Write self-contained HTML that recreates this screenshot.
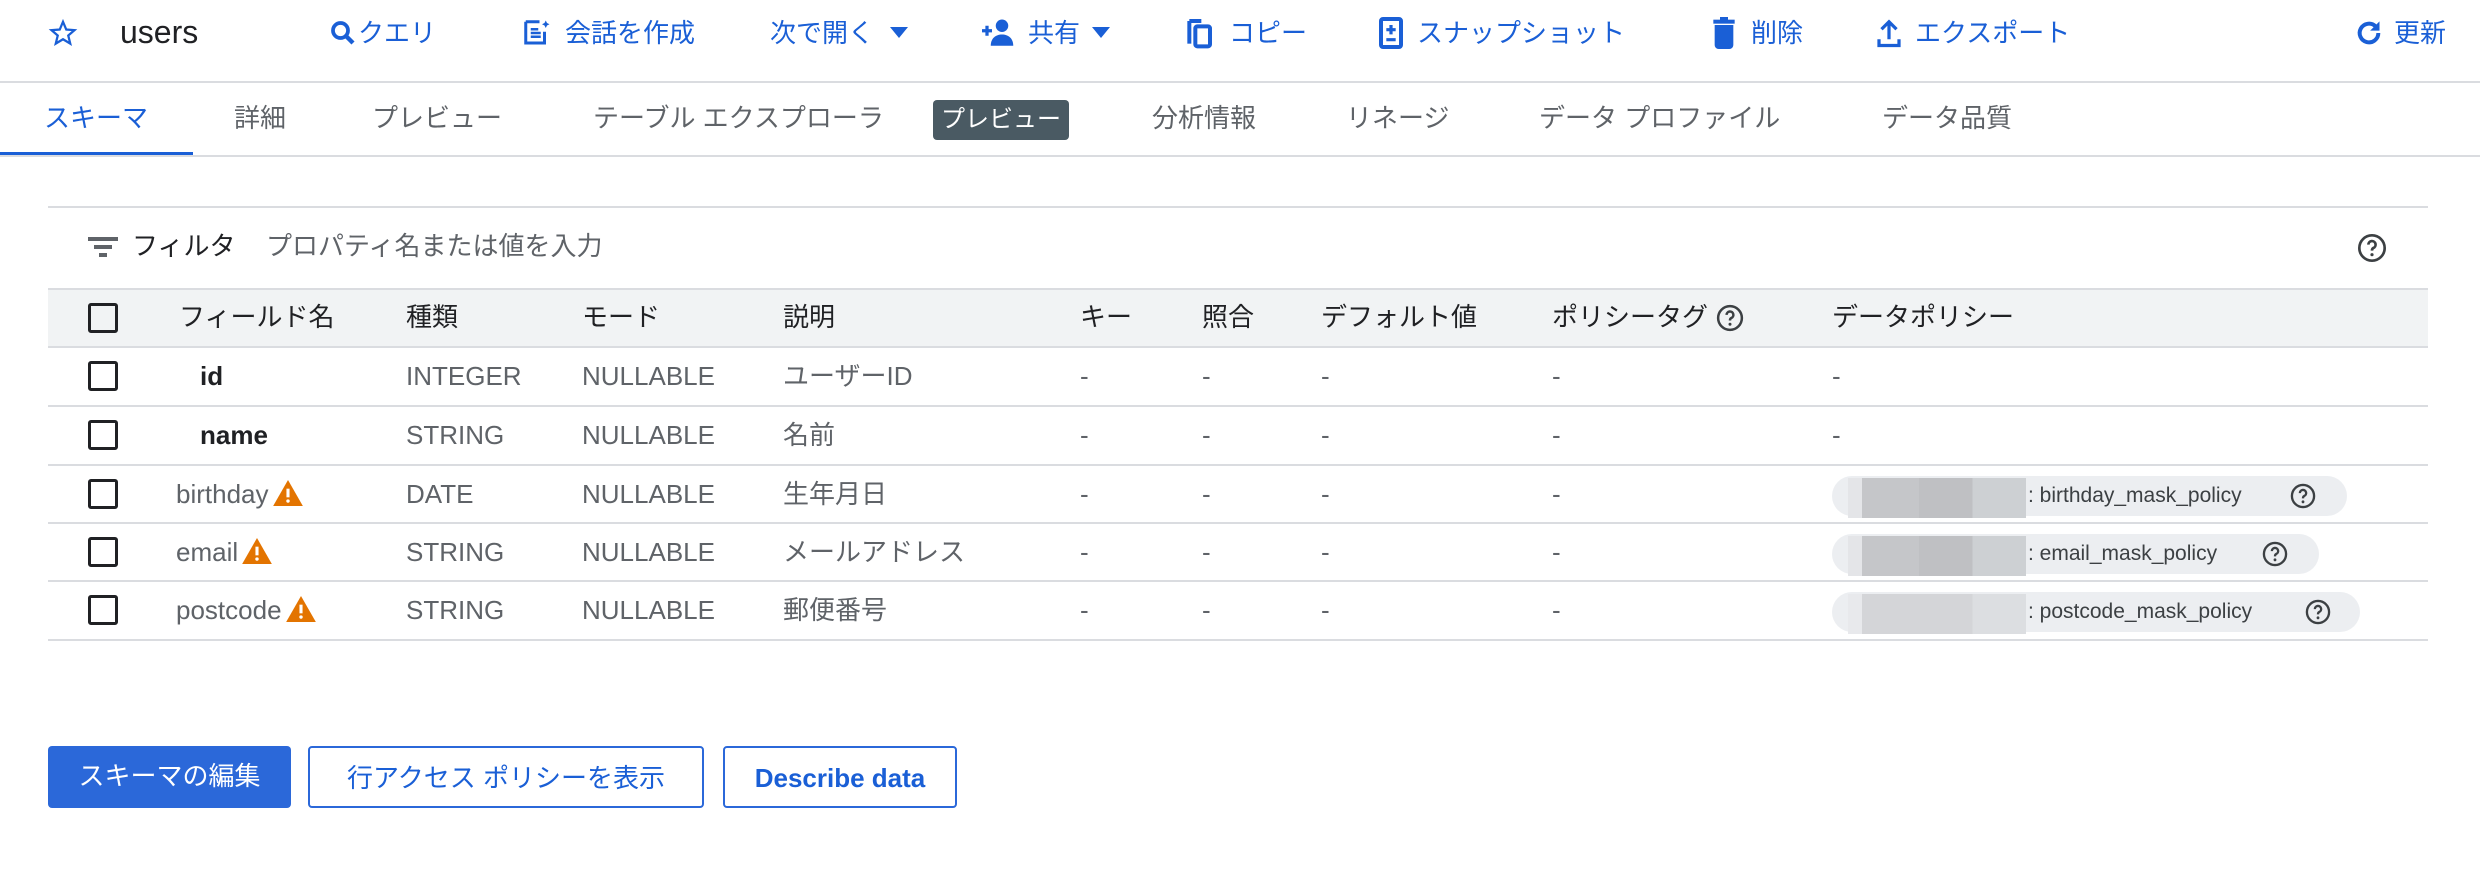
<!DOCTYPE html>
<html><head><meta charset="utf-8"><style>
*{margin:0;padding:0;box-sizing:border-box}
body{width:2480px;height:880px;background:#fff;font-family:"Liberation Sans","Noto Sans CJK JP",sans-serif;position:relative;overflow:hidden;color:#202124}
.a{position:absolute;white-space:nowrap}
.tb{color:#1a5fd6;font-size:26px;top:16px;line-height:34px}
.tab{font-size:26px;color:#5f6368;top:100px;line-height:36px}
.hl{position:absolute;left:48px;width:2380px;height:2px;background:#dadce0}
.cb{position:absolute;left:88px;width:30px;height:30px;border:3px solid #202124;border-radius:3px}
.c{position:absolute;font-size:26px;color:#5f6368;line-height:34px;white-space:nowrap}
.h{color:#202124}
.warn{display:inline-block;vertical-align:-3px;margin-left:4px}
.chip{position:absolute;left:1832px;height:40px;border-radius:20px;background:#eceef1;font-size:21px;color:#3c4043;line-height:40px;white-space:nowrap}
.chip span{position:absolute;left:196px;top:0}
.chip svg{position:absolute;top:6px}
.blur{position:absolute;left:16px;top:2px;width:178px;height:40px;background:linear-gradient(90deg,#e4e5e8 0 8%,#c5c6c9 8% 40%,#bfc0c3 40% 70%,#cdd0d3 70% 100%)}
.btn{position:absolute;top:746px;height:62px;border-radius:4px;font-size:26px;line-height:60px;text-align:center}
</style></head><body>
<svg class="a" style="left:48px;top:18px" width="30" height="30" viewBox="0 0 24 24"><path d="M12 3l2.6 6.2 6.6.5-5 4.3 1.6 6.5L12 17l-5.8 3.5 1.6-6.5-5-4.3 6.6-.5z" fill="none" stroke="#1a5fd6" stroke-width="1.8"/></svg>
<div class="a" style="left:120px;top:12px;font-size:32px;line-height:40px;color:#202124">users</div>
<svg class="a" style="left:328px;top:18px" width="30" height="30" viewBox="0 0 24 24"><circle cx="10" cy="10" r="6" fill="none" stroke="#1a5fd6" stroke-width="3"/><path d="M14 14l6 6" stroke="#1a5fd6" stroke-width="3.5"/></svg>
<div class="a tb" style="left:358px">クエリ</div>
<svg class="a" style="left:522px;top:17px" width="30" height="32" viewBox="0 0 24 24"><path d="M3 3v17h15V11" fill="none" stroke="#1a5fd6" stroke-width="2.4"/><path d="M3 3h11" stroke="#1a5fd6" stroke-width="2.4"/><path d="M7 9h6M7 12h8M7 15h8" stroke="#1a5fd6" stroke-width="2"/><path d="M19 2l1 2 2 1-2 1-1 2-1-2-2-1 2-1z" fill="#1a5fd6"/></svg>
<div class="a tb" style="left:565px">会話を作成</div>
<div class="a tb" style="left:770px">次で開く</div>
<svg class="a" style="left:890px;top:27px" width="18" height="12"><path d="M0 0h18L9 11z" fill="#1a5fd6"/></svg>
<svg class="a" style="left:980px;top:17px" width="34" height="30" viewBox="0 0 26 24"><path d="M1 11h8M5 7v8" stroke="#1a5fd6" stroke-width="2.6"/><circle cx="17" cy="7" r="5" fill="#1a5fd6"/><path d="M8 23c0-6 4-9 9-9s9 3 9 9z" fill="#1a5fd6"/></svg>
<div class="a tb" style="left:1028px">共有</div>
<svg class="a" style="left:1092px;top:27px" width="18" height="12"><path d="M0 0h18L9 11z" fill="#1a5fd6"/></svg>
<svg class="a" style="left:1186px;top:17px" width="28" height="32" viewBox="0 0 20 24"><path d="M2 3v17" stroke="#1a5fd6" stroke-width="3"/><path d="M2 3h9" stroke="#1a5fd6" stroke-width="3"/><rect x="6.5" y="7" width="11" height="15" rx="1.5" fill="none" stroke="#1a5fd6" stroke-width="3"/></svg>
<div class="a tb" style="left:1229px">コピー</div>
<svg class="a" style="left:1378px;top:17px" width="26" height="32" viewBox="0 0 18 24"><rect x="1.5" y="1.5" width="15" height="21" rx="1.5" fill="none" stroke="#1a5fd6" stroke-width="3"/><path d="M9 6v7M5.5 9.5h7M5.5 17h7" stroke="#1a5fd6" stroke-width="2.4"/></svg>
<div class="a tb" style="left:1417px">スナップショット</div>
<svg class="a" style="left:1712px;top:17px" width="24" height="32" viewBox="0 0 16 24"><rect x="0" y="2" width="16" height="3" fill="#1a5fd6"/><rect x="5" y="0" width="6" height="3" fill="#1a5fd6"/><path d="M1 6h14v15a3 3 0 0 1-3 3H4a3 3 0 0 1-3-3z" fill="#1a5fd6"/></svg>
<div class="a tb" style="left:1751px">削除</div>
<svg class="a" style="left:1876px;top:18px" width="26" height="30" viewBox="0 0 20 24"><path d="M10 17V3M4 9l6-6 6 6" fill="none" stroke="#1a5fd6" stroke-width="2.6"/><path d="M2 17v5h16v-5" fill="none" stroke="#1a5fd6" stroke-width="2.6"/></svg>
<div class="a tb" style="left:1915px">エクスポート</div>
<svg class="a" style="left:2355px;top:17px" width="28" height="32" viewBox="0 0 24 24"><path d="M20 12a8 8 0 1 1-2.5-5.8" fill="none" stroke="#1a5fd6" stroke-width="3.4"/><path d="M21 2v8h-8z" fill="#1a5fd6"/></svg>
<div class="a tb" style="left:2394px">更新</div>
<div class="a" style="left:0;top:81px;width:2480px;height:2px;background:#dadce0"></div>
<div class="a tab" style="left:44px;color:#1a5fd6">スキーマ</div>
<div class="a tab" style="left:234px">詳細</div>
<div class="a tab" style="left:372px">プレビュー</div>
<div class="a tab" style="left:593px">テーブル エクスプローラ</div>
<div class="a" style="left:933px;top:100px;width:136px;height:40px;background:#4a5a63;border-radius:4px;color:#fff;font-size:24px;line-height:40px;text-align:center">プレビュー</div>
<div class="a tab" style="left:1152px">分析情報</div>
<div class="a tab" style="left:1346px">リネージ</div>
<div class="a tab" style="left:1539px">データ プロファイル</div>
<div class="a tab" style="left:1882px">データ品質</div>
<div class="a" style="left:0;top:152px;width:193px;height:4px;background:#1a5fd6"></div>
<div class="a" style="left:0;top:155px;width:2480px;height:2px;background:#dadce0"></div>
<div class="hl" style="top:206px"></div>
<svg class="a" style="left:88px;top:237px" width="30" height="22"><rect x="0" y="0" width="30" height="4" fill="#5f6368"/><rect x="6" y="8" width="18" height="4" fill="#5f6368"/><rect x="11" y="16" width="8" height="4" fill="#5f6368"/></svg>
<div class="a" style="left:132px;top:228px;font-size:26px;line-height:36px;color:#202124">フィルタ</div>
<div class="a" style="left:266px;top:228px;font-size:26px;line-height:36px;color:#5f6368">プロパティ名または値を入力</div>
<svg class="a" style="left:2356px;top:232px" width="32" height="32" viewBox="0 0 24 24"><circle cx="12" cy="12" r="9.5" fill="none" stroke="#3c4043" stroke-width="2"/><path d="M9.3 9.5a2.7 2.7 0 1 1 3.7 2.5c-.8.4-1 1-1 2" fill="none" stroke="#3c4043" stroke-width="2"/><circle cx="12" cy="17" r="1.2" fill="#3c4043"/></svg>
<div class="a" style="left:48px;top:288px;width:2380px;height:59px;background:#f1f3f4;border-top:2px solid #dadce0"></div>
<div class="hl" style="top:346px"></div>
<div class="cb" style="top:303px"></div>
<div class="c h" style="left:179px;top:300px">フィールド名</div>
<div class="c h" style="left:406px;top:300px">種類</div>
<div class="c h" style="left:582px;top:300px">モード</div>
<div class="c h" style="left:783px;top:300px">説明</div>
<div class="c h" style="left:1080px;top:300px">キー</div>
<div class="c h" style="left:1202px;top:300px">照合</div>
<div class="c h" style="left:1321px;top:300px">デフォルト値</div>
<div class="c h" style="left:1552px;top:300px">ポリシータグ <svg width="30" height="30" viewBox="0 0 24 24" style="vertical-align:-7px"><circle cx="12" cy="12" r="9.5" fill="none" stroke="#3c4043" stroke-width="2"/><path d="M9.3 9.5a2.7 2.7 0 1 1 3.7 2.5c-.8.4-1 1-1 2" fill="none" stroke="#3c4043" stroke-width="2"/><circle cx="12" cy="17" r="1.2" fill="#3c4043"/></svg></div>
<div class="c h" style="left:1832px;top:300px">データポリシー</div>
<div class="hl" style="top:405px"></div>
<div class="hl" style="top:464px"></div>
<div class="hl" style="top:522px"></div>
<div class="hl" style="top:580px"></div>
<div class="hl" style="top:639px"></div>

<div class="cb" style="top:361px"></div>
<div class="c h" style="left:200px;top:359px;font-weight:bold">id</div>
<div class="c" style="left:406px;top:359px">INTEGER</div><div class="c" style="left:582px;top:359px">NULLABLE</div><div class="c" style="left:783px;top:359px">ユーザーID</div>
<div class="c" style="left:1080px;top:359px">-</div><div class="c" style="left:1202px;top:359px">-</div><div class="c" style="left:1321px;top:359px">-</div><div class="c" style="left:1552px;top:359px">-</div><div class="c" style="left:1832px;top:359px">-</div>

<div class="cb" style="top:420px"></div>
<div class="c h" style="left:200px;top:418px;font-weight:bold">name</div>
<div class="c" style="left:406px;top:418px">STRING</div><div class="c" style="left:582px;top:418px">NULLABLE</div><div class="c" style="left:783px;top:418px">名前</div>
<div class="c" style="left:1080px;top:418px">-</div><div class="c" style="left:1202px;top:418px">-</div><div class="c" style="left:1321px;top:418px">-</div><div class="c" style="left:1552px;top:418px">-</div><div class="c" style="left:1832px;top:418px">-</div>

<div class="cb" style="top:479px"></div>
<div class="c" style="left:176px;top:477px">birthday<svg class="warn" width="30" height="26" viewBox="0 0 24 21"><path d="M12 0L24 21H0z" fill="#e37400"/><path d="M12 7v7" stroke="#fff" stroke-width="2.5"/><circle cx="12" cy="17" r="1.4" fill="#fff"/></svg></div>
<div class="c" style="left:406px;top:477px">DATE</div><div class="c" style="left:582px;top:477px">NULLABLE</div><div class="c" style="left:783px;top:477px">生年月日</div>
<div class="c" style="left:1080px;top:477px">-</div><div class="c" style="left:1202px;top:477px">-</div><div class="c" style="left:1321px;top:477px">-</div><div class="c" style="left:1552px;top:477px">-</div>
<div class="chip" style="top:476px;width:515px"><div class="blur"></div><span>: birthday_mask_policy</span><svg style="left:457px" width="28" height="28" viewBox="0 0 24 24"><circle cx="12" cy="12" r="9.5" fill="none" stroke="#3c4043" stroke-width="2"/><path d="M9.3 9.5a2.7 2.7 0 1 1 3.7 2.5c-.8.4-1 1-1 2" fill="none" stroke="#3c4043" stroke-width="2"/><circle cx="12" cy="17" r="1.2" fill="#3c4043"/></svg></div>

<div class="cb" style="top:537px"></div>
<div class="c" style="left:176px;top:535px">email<svg class="warn" width="30" height="26" viewBox="0 0 24 21"><path d="M12 0L24 21H0z" fill="#e37400"/><path d="M12 7v7" stroke="#fff" stroke-width="2.5"/><circle cx="12" cy="17" r="1.4" fill="#fff"/></svg></div>
<div class="c" style="left:406px;top:535px">STRING</div><div class="c" style="left:582px;top:535px">NULLABLE</div><div class="c" style="left:783px;top:535px">メールアドレス</div>
<div class="c" style="left:1080px;top:535px">-</div><div class="c" style="left:1202px;top:535px">-</div><div class="c" style="left:1321px;top:535px">-</div><div class="c" style="left:1552px;top:535px">-</div>
<div class="chip" style="top:534px;width:487px"><div class="blur"></div><span>: email_mask_policy</span><svg style="left:429px" width="28" height="28" viewBox="0 0 24 24"><circle cx="12" cy="12" r="9.5" fill="none" stroke="#3c4043" stroke-width="2"/><path d="M9.3 9.5a2.7 2.7 0 1 1 3.7 2.5c-.8.4-1 1-1 2" fill="none" stroke="#3c4043" stroke-width="2"/><circle cx="12" cy="17" r="1.2" fill="#3c4043"/></svg></div>

<div class="cb" style="top:595px"></div>
<div class="c" style="left:176px;top:593px">postcode<svg class="warn" width="30" height="26" viewBox="0 0 24 21"><path d="M12 0L24 21H0z" fill="#e37400"/><path d="M12 7v7" stroke="#fff" stroke-width="2.5"/><circle cx="12" cy="17" r="1.4" fill="#fff"/></svg></div>
<div class="c" style="left:406px;top:593px">STRING</div><div class="c" style="left:582px;top:593px">NULLABLE</div><div class="c" style="left:783px;top:593px">郵便番号</div>
<div class="c" style="left:1080px;top:593px">-</div><div class="c" style="left:1202px;top:593px">-</div><div class="c" style="left:1321px;top:593px">-</div><div class="c" style="left:1552px;top:593px">-</div>
<div class="chip" style="top:592px;width:528px"><div class="blur" style="background:linear-gradient(90deg,#e8e9ec 0 8%,#d4d5d8 8% 70%,#dcdee1 70% 100%)"></div><span>: postcode_mask_policy</span><svg style="left:472px" width="28" height="28" viewBox="0 0 24 24"><circle cx="12" cy="12" r="9.5" fill="none" stroke="#3c4043" stroke-width="2"/><path d="M9.3 9.5a2.7 2.7 0 1 1 3.7 2.5c-.8.4-1 1-1 2" fill="none" stroke="#3c4043" stroke-width="2"/><circle cx="12" cy="17" r="1.2" fill="#3c4043"/></svg></div>
<div class="btn" style="left:48px;width:243px;background:#2b68d9;color:#fff">スキーマの編集</div>
<div class="btn" style="left:308px;width:396px;border:2px solid #2b68d9;color:#1a5fd6">行アクセス ポリシーを表示</div>
<div class="btn" style="left:723px;width:234px;border:2px solid #2b68d9;color:#1a5fd6;font-weight:bold">Describe data</div>
</body></html>
